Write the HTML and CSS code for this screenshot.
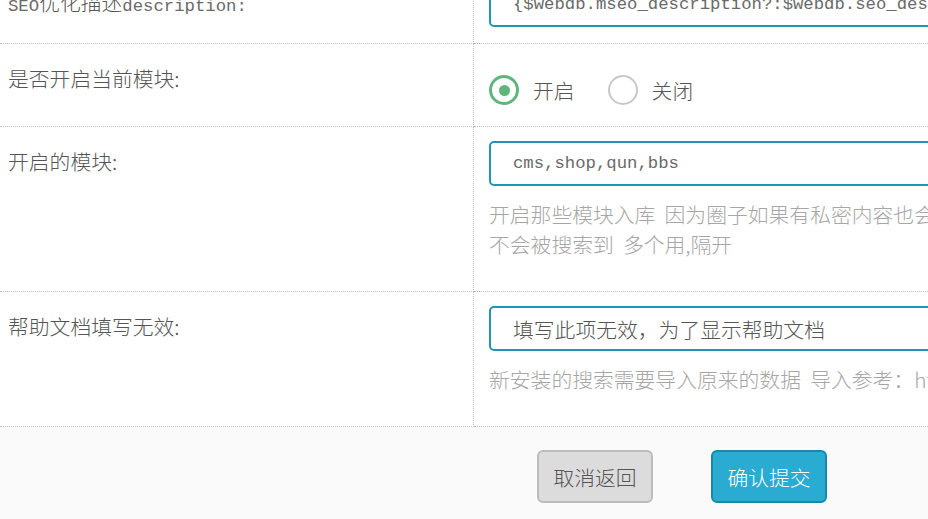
FILE: index.html
```html
<!DOCTYPE html>
<html lang="zh-CN">
<head>
<meta charset="utf-8">
<title>搜索设置</title>
<link rel="stylesheet" href="styles.css">
</head>
<body>
<div class="page">
  <div class="row row-first">
    <div class="label"><span class="mono">SEO</span>优化描述<span class="mono">description:</span></div>
    <div class="field">
      <div class="input"><span class="mono">{$webdb.mseo_description?:$webdb.seo_description}</span></div>
    </div>
  </div>

  <div class="row">
    <div class="label">是否开启当前模块:</div>
    <div class="field field-radio">
      <label class="radio"><span class="dot checked"></span><span>开启</span></label>
      <label class="radio"><span class="dot"></span><span>关闭</span></label>
    </div>
  </div>

  <div class="row">
    <div class="label">开启的模块:</div>
    <div class="field">
      <div class="input"><span class="mono">cms,shop,qun,bbs</span></div>
      <div class="help">
        <div class="line">开启那些模块入库&nbsp; 因为圈子如果有私密内容也会被搜索到</div>
        <div class="line">不会被搜索到&nbsp; 多个用,隔开</div>
      </div>
    </div>
  </div>

  <div class="row">
    <div class="label">帮助文档填写无效:</div>
    <div class="field">
      <div class="input">填写此项无效，为了显示帮助文档</div>
      <div class="help">
        <div class="line">新安装的搜索需要导入原来的数据&nbsp; 导入参考：http://help.php168.com</div>
      </div>
    </div>
  </div>

  <div class="footer">
    <button class="btn btn-cancel" type="button">取消返回</button>
    <button class="btn btn-submit" type="button">确认提交</button>
  </div>
</div>
</body>
</html>
```

FILE: styles.css
```css
html, body {
  margin: 0;
  padding: 0;
  overflow: hidden;
  background: #fafafa;
}

body {
  font-family: "Noto Sans CJK SC", "Noto Sans", sans-serif;
  font-weight: 300;
  color: #555;
}

.page {
  width: 1400px;
  margin-top: -32px;
}

.mono {
  font-family: "Liberation Mono", "Noto Sans CJK SC", monospace;
  font-size: 17.3px;
  color: #6a6a6a;
}

.row {
  display: grid;
  grid-template-columns: 474px 1fr;
  background: #fff;
}

.label {
  box-sizing: border-box;
  border-right: 1px dotted #bdbdbd;
  border-bottom: 1px dotted #bdbdbd;
  padding: 20px 8px 0;
  font-size: 20.8px;
  line-height: 28px;
  color: #555;
  white-space: nowrap;
}

.field {
  border-bottom: 1px dotted #bdbdbd;
  padding: 14px 15px 32px;
}

.row-first .field {
  padding-bottom: 16px;
}

.input {
  box-sizing: border-box;
  height: 45px;
  border: 2px solid #1f95b3;
  border-radius: 5px;
  padding: 0 22px;
  display: flex;
  align-items: center;
  font-size: 20.8px;
  color: #555;
  white-space: nowrap;
  overflow: hidden;
  background: #fff;
}

.help {
  margin-top: 13px;
  font-size: 20.8px;
  line-height: 30px;
  color: #a6a6a6;
  white-space: nowrap;
}

.field-radio {
  display: flex;
  align-items: center;
  padding: 31px 15px 21px;
}

.radio {
  display: flex;
  align-items: center;
  gap: 14px;
  font-size: 20.8px;
  line-height: 30px;
  color: #555;
  margin-right: 33px;
}

.dot {
  box-sizing: border-box;
  width: 30px;
  height: 30px;
  border-radius: 50%;
  border: 2px solid #c8c8c8;
  display: flex;
  align-items: center;
  justify-content: center;
  background: #fff;
}

.dot.checked {
  border: 3px solid #5fb67c;
}

.dot.checked::after {
  content: "";
  width: 11px;
  height: 11px;
  border-radius: 50%;
  background: #5fb67c;
}

.footer {
  display: flex;
  gap: 58px;
  padding: 23px 0 0 537px;
  height: 100px;
  background: #fafafa;
}

.btn {
  box-sizing: border-box;
  width: 116px;
  height: 53px;
  border-radius: 6px;
  font-family: "Noto Sans CJK SC", sans-serif;
  font-weight: 300;
  font-size: 20.8px;
  padding: 0;
  cursor: pointer;
}

.btn-cancel {
  background: #dcdcdc;
  border: 2px solid #bcbcbc;
  color: #555;
}

.btn-submit {
  background: #2aabd2;
  border: 2px solid #1b87a6;
  color: #fff;
}
```
